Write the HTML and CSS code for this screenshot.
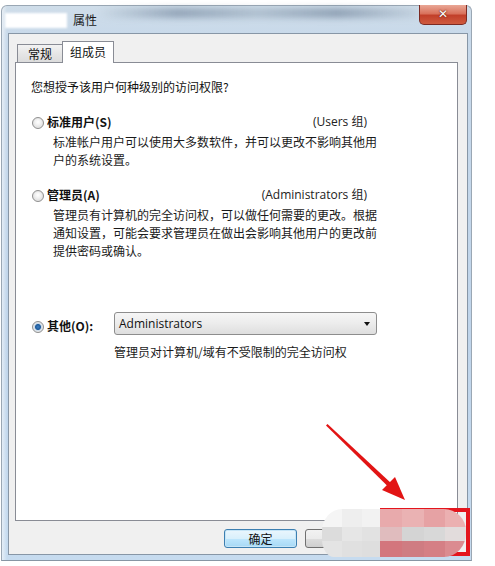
FILE: index.html
```html
<!DOCTYPE html>
<html lang="zh-CN">
<head>
<meta charset="utf-8">
<title>属性</title>
<link rel="stylesheet" href="styles.css">
</head>
<body>
<div class="window">
  <div class="titlebar">
    <span class="title-mask"></span>
    <span class="title">属性</span>
    <span class="close">✕</span>
  </div>
  <div class="client">
    <div class="tabs">
      <span class="tab">常规</span>
      <span class="tab active">组成员</span>
    </div>
    <div class="panel">
      <p class="question">您想授予该用户何种级别的访问权限?</p>
      <div class="opt-head first">
        <span class="radio"></span>
        <b class="label">标准用户(S)</b>
        <span class="group">(Users 组)</span>
      </div>
      <p class="desc">标准帐户用户可以使用大多数软件，并可以更改不影响其他用<br>户的系统设置。</p>
      <div class="opt-head second">
        <span class="radio"></span>
        <b class="label">管理员(A)</b>
        <span class="group">(Administrators 组)</span>
      </div>
      <p class="desc">管理员有计算机的完全访问权，可以做任何需要的更改。根据<br>通知设置，可能会要求管理员在做出会影响其他用户的更改前<br>提供密码或确认。</p>
      <div class="other-row">
        <span class="radio checked"></span>
        <b class="label other-label">其他(O):</b>
        <div class="select"><span>Administrators</span><span class="caret"></span></div>
      </div>
      <p class="other-desc">管理员对计算机/域有不受限制的完全访问权</p>
    </div>
    <div class="buttons">
      <button class="btn default">确定</button>
      <button class="btn">取消</button>
      <button class="btn">应用(A)</button>
    </div>
  </div>
</div>

<div class="red-box"></div>
<div class="blob">
  <span class="c1"></span><span class="c2"></span><span class="c3"></span><span class="c4"></span><span class="c5"></span><span class="c6"></span><span class="c7"></span>
  <span class="c8"></span><span class="c9"></span><span class="c10"></span><span class="c11"></span><span class="c12"></span><span class="c13"></span><span class="c14"></span>
  <span class="c15"></span><span class="c16"></span><span class="c17"></span><span class="c18"></span><span class="c19"></span><span class="c20"></span><span class="c21"></span>
</div>
<svg class="arrow" width="495" height="566" viewBox="0 0 495 566">
  <polygon points="326,425.5 327.5,424 392,484 389,487.5" fill="#e21414"/>
  <polygon points="405,500 395,477 382,490" fill="#e21414"/>
</svg>
</body>
</html>
```

FILE: styles.css
```css
* { box-sizing: border-box; }

body {
  margin: 0;
  background: #ffffff;
  font-family: "Noto Sans CJK SC", "Noto Sans", sans-serif;
  font-size: 12px;
  line-height: 18px;
  color: #111;
  position: relative;
  width: 495px;
  height: 566px;
  overflow: hidden;
}

.window {
  margin: 5px 0 0 1px;
  width: 471px;
  height: 556px;
  border-radius: 6px 6px 0 0;
  padding: 0 3px 5px 6px;
  display: flex;
  flex-direction: column;
  background:
    linear-gradient(90deg, rgba(255,255,255,0.55) 0, rgba(255,255,255,0) 5px),
    linear-gradient(180deg, #cfdde9 0, #c8d9ea 30px, #bfd4ea 60%, #c6dbef 100%);
  border: 1px solid #9aa7b4;
  border-bottom-color: #8796a4;
}

.titlebar {
  position: relative;
  height: 27px;
  display: flex;
  align-items: flex-start;
  flex-shrink: 0;
}

.titlebar::before {
  content: "";
  position: absolute;
  left: 90px;
  top: 2px;
  width: 320px;
  height: 10px;
  background: linear-gradient(90deg, rgba(110,130,150,0.0), rgba(100,120,145,0.55) 25%, rgba(120,140,160,0.35) 50%, rgba(95,115,140,0.55) 75%, rgba(110,130,150,0.1));
  filter: blur(3px);
}

.title-mask {
  position: relative;
  margin: 7px 0 0 -3px;
  width: 62px;
  height: 15px;
  background: #ffffff;
  filter: blur(1px);
}

.title {
  position: relative;
  margin: 6px 0 0 6px;
  font-size: 12px;
  line-height: 16px;
  color: #1a1a1a;
}

.close {
  position: relative;
  margin-left: auto;
  margin-right: 1px;
  margin-top: -1px;
  width: 48px;
  height: 20px;
  border: 1px solid #7b2a22;
  border-top: none;
  border-radius: 0 0 5px 5px;
  background: linear-gradient(180deg, #e9a796 0, #d9725c 45%, #c2402a 55%, #cf5a3e 100%);
  color: #fff;
  font-family: "DejaVu Sans", sans-serif;
  font-weight: bold;
  font-size: 12px;
  line-height: 19px;
  text-align: center;
  text-shadow: 0 0 2px #6a1a10, 0 0 1px #6a1a10;
}

.client {
  flex: 1;
  background: #f0f0f0;
  border: 1px solid #8796a6;
  display: flex;
  flex-direction: column;
}

.tabs {
  display: flex;
  align-items: flex-end;
  margin: 7px 0 0 8px;
  height: 21px;
  position: relative;
  z-index: 1;
}

.tab {
  width: 46px;
  height: 18px;
  border: 1px solid #898c95;
  border-bottom: none;
  background: linear-gradient(180deg, #f3f3f3 0, #e6e6e6 50%, #dcdcdc 100%);
  text-align: center;
  line-height: 17px;
  color: #111;
}

.tab.active {
  width: 52px;
  height: 22px;
  margin-bottom: -1px;
  margin-left: -1px;
  background: #ffffff;
  line-height: 20px;
}

.panel {
  margin: 0 9px 0 6px;
  height: 459px;
  background: #ffffff;
  border: 1px solid #898c95;
  padding: 15px 0 0 15px;
}

.question {
  margin: 0;
  line-height: 18px;
}

.opt-head {
  display: flex;
  align-items: center;
  height: 18px;
  width: 336px;
}

.opt-head.first { margin-top: 17px; }
.opt-head.second { margin-top: 17px; }

.radio {
  width: 12px;
  height: 12px;
  border-radius: 50%;
  border: 1px solid #8f8f8f;
  background: radial-gradient(circle at 50% 40%, #ffffff 0, #f0f0f0 40%, #cfcfcf 100%);
  box-shadow: inset 0 0 0 1px #e6e6e6;
  margin: 1px 0 0 1px;
  flex-shrink: 0;
}

.radio.checked {
  background:
    radial-gradient(circle, #3f7fc0 0, #1c5a9c 2.5px, #c9d9e8 3.5px, #f4f4f4 100%);
}

.label {
  margin-left: 3px;
  font-weight: bold;
  color: #111;
}

.group {
  margin-left: auto;
  color: #222;
  font-family: "Open Sans", "Noto Sans CJK SC", sans-serif;
}

.desc {
  margin: 2px 0 0 22px;
  white-space: nowrap;
  line-height: 18px;
  color: #1a1a1a;
}

.other-row {
  display: flex;
  align-items: center;
  margin-top: 52px;
  height: 23px;
}

.other-label {
  width: 67px;
  margin-top: 5px;
}

.other-row .radio { margin-top: 6px; }

.select {
  width: 263px;
  height: 23px;
  border: 1px solid #8d8d8d;
  border-radius: 3px;
  background: linear-gradient(180deg, #f6f6f6 0, #ececec 50%, #dedede 100%);
  display: flex;
  align-items: center;
  justify-content: space-between;
  padding: 0 6px 0 4px;
  font-family: "Open Sans", "Noto Sans", sans-serif;
  font-size: 12px;
  color: #111;
}

.caret {
  width: 0;
  height: 0;
  border-left: 3.5px solid transparent;
  border-right: 3.5px solid transparent;
  border-top: 4px solid #111;
}

.other-desc {
  margin: 8px 0 0 83px;
  line-height: 18px;
  color: #1a1a1a;
}

.buttons {
  display: flex;
  justify-content: flex-end;
  gap: 8px;
  margin: 8px 8px 0 0;
}

.btn {
  width: 73px;
  height: 19px;
  padding: 0;
  border: 1px solid #707070;
  border-radius: 3px;
  background: linear-gradient(180deg, #f2f2f2 0, #ebebeb 50%, #dddddd 51%, #cfcfcf 100%);
  font-family: "Noto Sans CJK SC", sans-serif;
  font-size: 12px;
  line-height: 16px;
  color: #111;
}

.btn.default {
  border-color: #3c7fb1;
  background: linear-gradient(180deg, #eaf6fd 0, #d9f0fc 50%, #bee6fd 51%, #a7d9f5 100%);
  box-shadow: inset 0 0 0 1px #c6e5f7;
}

.red-box {
  position: absolute;
  left: 380px;
  top: 508px;
  width: 90px;
  height: 48px;
  border: 4px solid #e4151d;
  border-left: none;
}

.blob {
  position: absolute;
  left: 322px;
  top: 509px;
  width: 144px;
  height: 48px;
  border-radius: 20px 22px 22px 12px / 22px 22px 24px 18px;
  overflow: hidden;
  display: grid;
  grid-template-columns: 20px 20px 18px 22px 22px 21px 21px;
  grid-template-rows: 18px 14px 16px;
  filter: blur(0.6px);
}

.c1 { background: #f5f5f5; }
.c2 { background: #eeeeee; }
.c3 { background: #f2f2f2; }
.c4 { background: #e8aaac; }
.c5 { background: #eab2b3; }
.c6 { background: #e6a2a4; }
.c7 { background: #ebb0b1; }
.c8 { background: #dcdcdc; }
.c9 { background: #e6e6e6; }
.c10 { background: #e2e2e2; }
.c11 { background: #e0bcbe; }
.c12 { background: #d4d4d4; }
.c13 { background: #d8d8d8; }
.c14 { background: #e2dcdc; }
.c15 { background: #e4e4e4; }
.c16 { background: #e0e0e0; }
.c17 { background: #dedede; }
.c18 { background: #d3767d; }
.c19 { background: #cf7c82; }
.c20 { background: #d57f85; }
.c21 { background: #db8b90; }

.arrow {
  position: absolute;
  left: 0;
  top: 0;
  pointer-events: none;
}
```
